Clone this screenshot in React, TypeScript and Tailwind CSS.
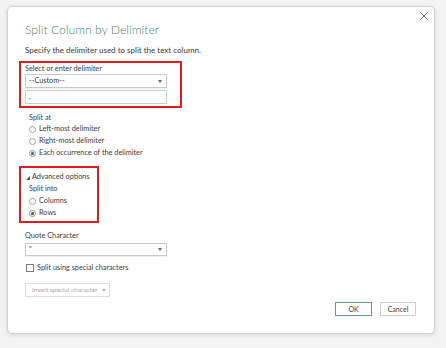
import React from "react";

const font = { fontFamily: 'Lato, "Open Sans", Arial, sans-serif' };

const Arrow = () => (
  <svg width="4" height="3" viewBox="0 0 4 3" className="shrink-0">
    <polygon points="0,0 4,0 2,3" fill="#6b6b6b" />
  </svg>
);

const Radio = ({ label, checked }: { label: string; checked?: boolean }) => (
  <div className="flex h-[12px] items-center gap-[3px]">
    <span
      className={
        "flex h-[7px] w-[7px] items-center justify-center rounded-full border " +
        (checked ? "border-[#9a9a9a] bg-[#ededed]" : "border-[#a0a0a0] bg-white")
      }
    >
      {checked && <span className="h-[3px] w-[3px] rounded-full bg-[#555]" />}
    </span>
    <span className="text-[7.3px] leading-[12px] text-[#404040]">{label}</span>
  </div>
);

const Select = ({ value, h }: { value: string; h: string }) => (
  <div
    className={
      "flex w-[142px] items-center justify-between border border-[#c9c9c9] bg-white pl-[3px] pr-[4px] shadow-[0_1px_1px_rgba(0,0,0,0.06)] " +
      h
    }
  >
    <span className="text-[7.3px] leading-none text-[#404040]">{value}</span>
    <Arrow />
  </div>
);

export default function App() {
  return (
    <div className="h-[348px] w-[446px] bg-[#f3f3f3] pl-[7px] pt-[6px]" style={font}>
      <div className="relative flex h-[328px] w-[428px] flex-col rounded-[5px] border border-[#d2d2d2] bg-white pl-[17px] pr-[18px] pb-[17px] shadow-[0_1px_4px_rgba(0,0,0,0.12)]">
        <button className="absolute right-[6px] top-[4px] flex h-[9px] w-[9px] items-center justify-center">
          <svg width="8" height="8" viewBox="0 0 8 8">
            <path d="M0.5 0.5 L7.5 7.5 M7.5 0.5 L0.5 7.5" stroke="#7a7a7a" strokeWidth="1" />
          </svg>
        </button>

        <h1 className="mt-[15px] text-[12.2px] font-light leading-[16px] text-[#4a7f6c]">
          Split Column by Delimiter
        </h1>
        <p className="mt-[6px] text-[8px] leading-[12px] text-[#3a3a3a]">
          Specify the delimiter used to split the text column.
        </p>

        <div className="ml-[-6px] mt-[5px] w-[163px] border-2 border-[#e31b1b] pb-[2px] pl-[4px] pt-[1px]">
          <div className="text-[7.3px] leading-[10px] text-[#404040]">Select or enter delimiter</div>
          <Select value="--Custom--" h="h-[14px]" />
          <div className="mt-[2px] flex h-[14px] w-[142px] items-center border border-[#b9dcc9] bg-white pl-[3px]">
            <span className="text-[7.3px] leading-none text-[#404040]">,</span>
          </div>
        </div>

        <div className="mt-[5px] pl-[4px]">
          <div className="text-[7.3px] leading-[10px] text-[#404040]">Split at</div>
          <Radio label="Left-most delimiter" />
          <Radio label="Right-most delimiter" />
          <Radio label="Each occurrence of the delimiter" checked />
        </div>

        <div className="ml-[-6px] mt-[7px] w-[80px] border-2 border-[#e31b1b] pb-[2px] pl-[5px] pt-[3px]">
          <div className="flex h-[12px] items-center gap-[2px]">
            <svg width="4" height="4" viewBox="0 0 4 4" className="mt-[1px]">
              <polygon points="4,0 4,4 0,4" fill="#555" />
            </svg>
            <span className="text-[7.3px] leading-[12px] text-[#404040]">Advanced options</span>
          </div>
          <div className="pl-[3px]">
            <div className="text-[7.3px] leading-[12px] text-[#404040]">Split into</div>
            <Radio label="Columns" />
            <Radio label="Rows" checked />
          </div>
        </div>

        <div className="mt-[6px] text-[7.3px] leading-[13px] text-[#404040]">Quote Character</div>
        <div className="mt-[1px]">
          <Select value={'"'} h="h-[13px]" />
        </div>

        <div className="mt-[6px] flex h-[12px] items-center gap-[3px] pl-[1px]">
          <span className="h-[8px] w-[8px] border border-[#7d7d7d] bg-white" />
          <span className="text-[7.3px] leading-[12px] text-[#404040]">Split using special characters</span>
        </div>

        <div className="mt-[9px] flex h-[14px] w-[85px] items-center gap-[4px] whitespace-nowrap border border-[#dedede] bg-white pl-[6px]">
          <span className="text-[6.5px] leading-none text-[#a9a9a9]">Insert special character</span>
          <svg width="4" height="3" viewBox="0 0 4 3" className="shrink-0">
            <polygon points="0,0 4,0 2,3" fill="#b5b5b5" />
          </svg>
        </div>

        <div className="mt-auto flex justify-end gap-[8px]">
          <button className="flex h-[14px] w-[37px] items-center justify-center border border-[#5f9f80] bg-white text-[7px] leading-none text-[#404040]">
            OK
          </button>
          <button className="flex h-[14px] w-[36px] items-center justify-center border border-[#cfcfcf] bg-white text-[7px] leading-none text-[#404040]">
            Cancel
          </button>
        </div>
      </div>
    </div>
  );
}
